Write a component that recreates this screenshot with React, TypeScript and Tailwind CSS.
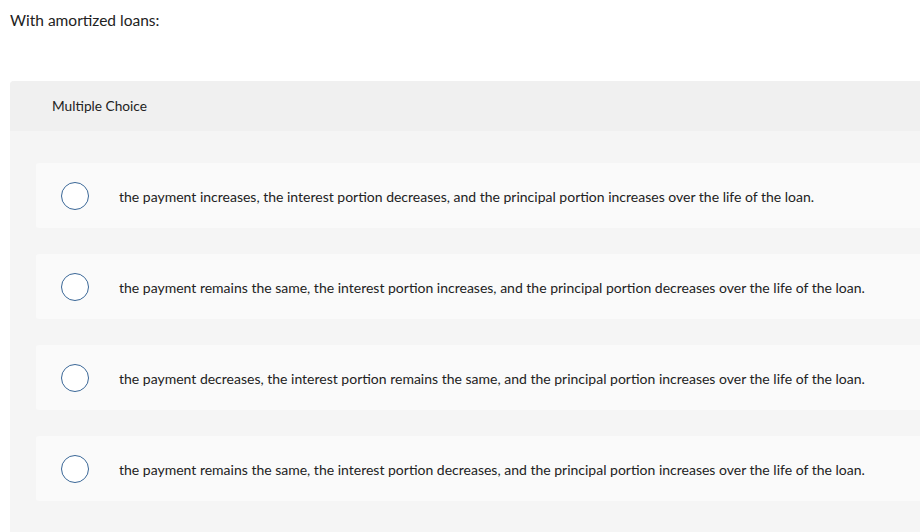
import React from 'react';

const choices = [
  'the payment increases, the interest portion decreases, and the principal portion increases over the life of the loan.',
  'the payment remains the same, the interest portion increases, and the principal portion decreases over the life of the loan.',
  'the payment decreases, the interest portion remains the same, and the principal portion increases over the life of the loan.',
  'the payment remains the same, the interest portion decreases, and the principal portion increases over the life of the loan.',
];

const App: React.FC = () => {
  return (
    <div className="w-[920px] h-[532px] overflow-hidden bg-white text-[#222] font-['Lato','Open_Sans',sans-serif]">
      <div className="pl-[10px] pt-[10px] text-[15.5px] leading-[20px]">With amortized loans:</div>

      <div className="ml-[10px] mt-[51px] w-[960px] rounded-t-[4px] bg-[#f5f5f5] pb-10">
        {/* Header */}
        <div className="h-[50px] flex items-center pl-[42px] pt-[1px] bg-[#f0f0f0] rounded-t-[4px] text-[13.7px]">
          Multiple Choice
        </div>

        {/* Options */}
        <div className="flex flex-col gap-[26px] pt-[32px] pl-[26px]">
          {choices.map((c) => (
            <div key={c} className="h-[65px] flex items-center bg-[#fafafa] rounded-[3px]">
              <span className="ml-[25px] w-[28px] h-[28px] rounded-full border-[1.5px] border-[#3a6797] bg-white shrink-0" />
              <span className="ml-[30px] pt-[2px] text-[14px]">{c}</span>
            </div>
          ))}
        </div>
      </div>
    </div>
  );
};

export default App;
